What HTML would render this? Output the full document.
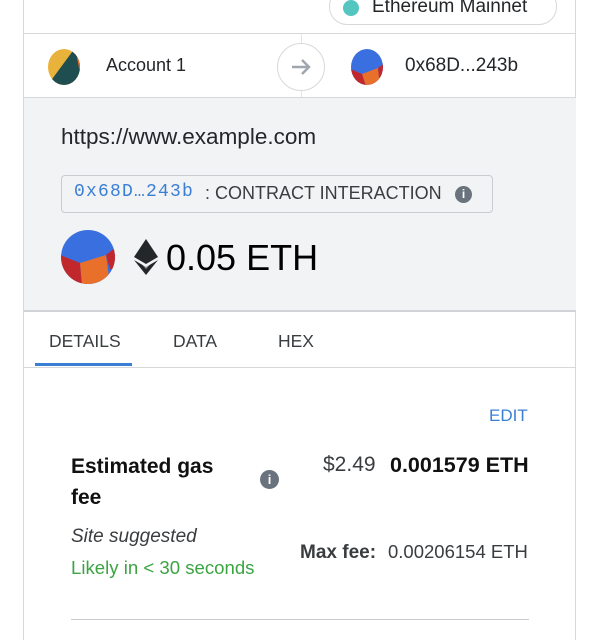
<!DOCTYPE html>
<html><head><style>
body{margin:0;width:602px;height:640px;background:#fff;font-family:"Liberation Sans",sans-serif;position:relative;overflow:hidden}
.a{position:absolute;white-space:nowrap}
.frame{left:23px;top:0;width:553px;height:640px;border-left:1px solid #d6d9dc;border-right:1px solid #d6d9dc;box-sizing:border-box}
</style></head><body>
<div class="a frame"></div>
<div class="a" style="left:329px;top:-12px;width:228px;height:37px;border:1px solid #d6d9dc;border-radius:18px;box-sizing:border-box"></div>
<div class="a" style="left:343px;top:0;width:16px;height:16px;border-radius:50%;background:#29b6af;opacity:.8"></div>
<div class="a" style="left:372px;top:-4px;font-size:19px;color:#24272a">Ethereum Mainnet</div>
<div class="a" style="left:23px;top:33px;width:553px;height:1px;background:#d6d9dc"></div>
<div class="a" style="left:301px;top:34px;width:1px;height:64px;background:#e3e5e8"></div>
<svg class="a" style="left:47px;top:48px" width="34" height="38" viewBox="0 0 34 38"><defs><clipPath id="c1"><ellipse cx="17" cy="19" rx="16" ry="18"/></clipPath></defs><g clip-path="url(#c1)"><rect width="34" height="38" fill="#e9b23a"/><polygon points="0,38 28,0 34,0 34,38" fill="#1f4e50"/><polygon points="28,0 34,0 34,30" fill="#e06a2a"/></g></svg>
<div class="a" style="left:106px;top:55px;font-size:18px;color:#24272a">Account 1</div>
<div class="a" style="left:277px;top:43px;width:48px;height:48px;border-radius:50%;border:1px solid #d6d9dc;background:#fff;box-sizing:border-box"></div>
<svg class="a" style="left:289px;top:55px" width="24" height="24" viewBox="0 0 24 24"><path d="M3 12H20M13 5l7 7-7 7" fill="none" stroke="#9fa6ae" stroke-width="2.5"/></svg>
<svg class="a" style="left:348px;top:48px" width="38" height="38" viewBox="0 0 38 38"><defs><clipPath id="c2"><ellipse cx="19" cy="19" rx="16" ry="18"/></clipPath></defs><g clip-path="url(#c2)"><rect width="38" height="38" fill="#3a6fe0"/><polygon points="0,20 14,26 18,38 0,38" fill="#c0282d"/><polygon points="14,26 30,20 32,38 18,38" fill="#e9702a"/><polygon points="30,20 38,14 38,38 32,38" fill="#c0282d"/></g></svg>
<div class="a" style="left:405px;top:55px;font-size:19px;color:#24272a">0x68D...243b</div>
<div class="a" style="left:24px;top:97px;width:552px;height:215px;background:#f2f3f4;border-top:1px solid #d6d9dc;border-bottom:2px solid #cfd2d6;box-sizing:border-box"></div>
<div class="a" style="left:61px;top:124px;font-size:22.5px;color:#24272a">https://www.example.com</div>
<div class="a" style="left:61px;top:175px;width:432px;height:38px;border:1px solid #c8ccd0;border-radius:4px;box-sizing:border-box"></div>
<div class="a" style="left:74px;top:182px;font-size:18px;font-family:'Liberation Mono',monospace;color:#3b7fd4;letter-spacing:1.2px">0x68D…243b</div>
<div class="a" style="left:205px;top:183px;font-size:18px;color:#3a3d40">: CONTRACT INTERACTION</div>
<div class="a" style="left:455px;top:186px;width:17px;height:17px;border-radius:50%;background:#6a737d;color:#fff;font-size:12px;font-weight:bold;text-align:center;line-height:17px">i</div>
<svg class="a" style="left:60px;top:229px" width="56" height="56" viewBox="0 0 56 56"><defs><clipPath id="c3"><ellipse cx="28" cy="28" rx="27" ry="27"/></clipPath></defs><g clip-path="url(#c3)"><rect width="56" height="56" fill="#3a6fe0"/><polygon points="0,26 20,34 22,56 0,56" fill="#c0282d"/><polygon points="20,34 46,26 50,56 22,56" fill="#e9702a"/><polygon points="46,26 56,18 56,40 50,40" fill="#c0282d"/></g></svg>
<svg class="a" style="left:134px;top:239px" width="24" height="36" viewBox="0 0 24 36"><path d="M12 0L0 18l12 7 12-7z" fill="#24272a"/><path d="M0 21l12 15 12-15-12 7z" fill="#24272a"/><path d="M5 22l7 4 7-4-7 8z" fill="#f2f3f4" opacity=".5"/></svg>
<div class="a" style="left:166px;top:237px;font-size:36px;color:#000">0.05 ETH</div>
<div class="a" style="left:49px;top:331px;font-size:17.5px;color:#3a3d40">DETAILS</div>
<div class="a" style="left:173px;top:331px;font-size:17.5px;color:#3a3d40">DATA</div>
<div class="a" style="left:278px;top:331px;font-size:17.5px;color:#3a3d40">HEX</div>
<div class="a" style="left:35px;top:363px;width:97px;height:3px;background:#3b7fd4"></div>
<div class="a" style="left:24px;top:367px;width:552px;height:1px;background:#d6d9dc"></div>
<div class="a" style="left:489px;top:406px;font-size:17px;color:#3b7fd4">EDIT</div>
<div class="a" style="left:71px;top:451px;font-size:21px;font-weight:bold;color:#111;line-height:31px">Estimated gas<br>fee</div>
<div class="a" style="left:260px;top:470px;width:19px;height:19px;border-radius:50%;background:#6a737d;color:#fff;font-size:13px;font-weight:bold;text-align:center;line-height:19px">i</div>
<div class="a" style="left:323px;top:453px;font-size:21px;color:#3a3d40">$2.49</div>
<div class="a" style="left:390px;top:453px;font-size:21.5px;font-weight:bold;color:#111">0.001579 ETH</div>
<div class="a" style="left:71px;top:526px;font-size:19px;font-style:italic;color:#3a3d40">Site suggested</div>
<div class="a" style="left:71px;top:557px;font-size:18.6px;color:#3ca443">Likely in &lt; 30 seconds</div>
<div class="a" style="left:300px;top:542px;font-size:19px;font-weight:bold;color:#3a3d40">Max fee:</div>
<div class="a" style="left:388px;top:541px;font-size:18.5px;color:#3a3d40">0.00206154 ETH</div>
<div class="a" style="left:71px;top:619px;width:458px;height:1px;background:#c8ccd0"></div>
</body></html>
